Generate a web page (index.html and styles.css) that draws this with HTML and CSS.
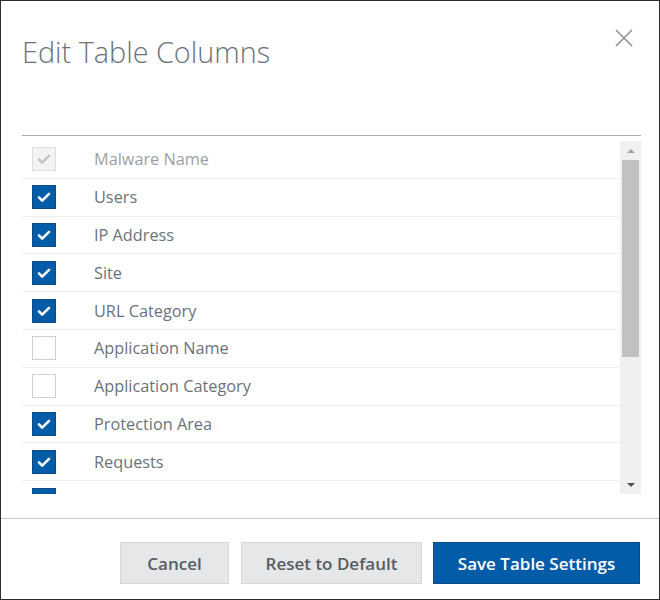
FILE: index.html
```html
<!doctype html>
<html lang="en">
<head>
<meta charset="utf-8">
<title>Edit Table Columns</title>
<link rel="stylesheet" href="styles.css">
</head>
<body>

<div class="dialog">
  <div class="header">
    <h1 class="title">Edit Table Columns</h1>
    <svg class="close" width="18" height="18" viewBox="0 0 18 18">
      <path d="M1 1 L17 17 M17 1 L1 17" stroke="#8c9297" stroke-width="1.6" fill="none"></path>
    </svg>
  </div>

  <div class="list">
    <div class="rows">
      <div class="row disabled">
        <span class="box"><svg viewBox="0 0 24 24"><path d="M6.5 12.5 L10 16 L17.5 8.5"></path></svg></span>
        <span class="label">Malware Name</span>
      </div>
      <div class="row checked">
        <span class="box"><svg viewBox="0 0 24 24"><path d="M6.5 12.5 L10 16 L17.5 8.5"></path></svg></span>
        <span class="label">Users</span>
      </div>
      <div class="row checked">
        <span class="box"><svg viewBox="0 0 24 24"><path d="M6.5 12.5 L10 16 L17.5 8.5"></path></svg></span>
        <span class="label">IP Address</span>
      </div>
      <div class="row checked">
        <span class="box"><svg viewBox="0 0 24 24"><path d="M6.5 12.5 L10 16 L17.5 8.5"></path></svg></span>
        <span class="label">Site</span>
      </div>
      <div class="row checked">
        <span class="box"><svg viewBox="0 0 24 24"><path d="M6.5 12.5 L10 16 L17.5 8.5"></path></svg></span>
        <span class="label">URL Category</span>
      </div>
      <div class="row">
        <span class="box"></span>
        <span class="label">Application Name</span>
      </div>
      <div class="row">
        <span class="box"></span>
        <span class="label">Application Category</span>
      </div>
      <div class="row checked">
        <span class="box"><svg viewBox="0 0 24 24"><path d="M6.5 12.5 L10 16 L17.5 8.5"></path></svg></span>
        <span class="label">Protection Area</span>
      </div>
      <div class="row checked">
        <span class="box"><svg viewBox="0 0 24 24"><path d="M6.5 12.5 L10 16 L17.5 8.5"></path></svg></span>
        <span class="label">Requests</span>
      </div>
      <div class="row checked">
        <span class="box"><svg viewBox="0 0 24 24"><path d="M6.5 12.5 L10 16 L17.5 8.5"></path></svg></span>
        <span class="label">Allowed Requests</span>
      </div>
    </div>
    <div class="scrollbar">
      <span class="arrow up"></span>
      <span class="thumb"></span>
      <span class="arrow down"></span>
    </div>
  </div>

  <div class="footer">
    <button class="btn cancel">Cancel</button>
    <button class="btn reset">Reset to Default</button>
    <button class="btn primary">Save Table Settings</button>
  </div>
</div>

</body>
</html>
```

FILE: styles.css
```css
body {
  margin: 0;
  font-family: "Open Sans", "Noto Sans", sans-serif;
}
.dialog {
  width: 660px;
  height: 600px;
  box-sizing: border-box;
  border: 1px solid #2e2e2e;
  background: #fff;
  display: flex;
  flex-direction: column;
}
.header {
  display: flex;
  justify-content: space-between;
  align-items: flex-start;
  height: 134px;
  padding: 0 26px 0 21px;
}
.title {
  margin: 33px 0 0;
  font-size: 28.8px;
  line-height: 36px;
  font-weight: 300;
  color: #6b7379;
}
.close {
  margin-top: 28px;
}
.list {
  margin: 0 18px 0 21px;
  border-top: 1px solid #a9acae;
  padding-top: 5px;
  display: flex;
  height: 353px;
}
.rows {
  flex: 1;
  overflow: hidden;
}
.row {
  height: 36.8px;
  border-bottom: 1px solid #eeeeee;
  display: flex;
  align-items: center;
}
.box {
  width: 22px;
  height: 22px;
  margin-left: 10px;
  border: 1px solid #cfd2d4;
  background: #fff;
  display: flex;
}
.box svg {
  width: 22px;
  height: 22px;
}
.box path {
  fill: none;
  stroke: #fff;
  stroke-width: 2.8;
  stroke-linecap: round;
  stroke-linejoin: round;
}
.checked .box {
  background: #035ca8;
  border-color: #0d4b85;
}
.disabled .box {
  background: #f3f3f3;
  border-color: #dedede;
}
.disabled .box path {
  stroke: #c2c4c6;
}
.label {
  margin-left: 38px;
  font-size: 16.3px;
  color: #6b7379;
}
.disabled .label {
  color: #9b9fa3;
}
.scrollbar {
  width: 21px;
  margin-left: 1px;
  background: #f0f0f0;
  display: flex;
  flex-direction: column;
  align-items: center;
}
.arrow {
  width: 0;
  height: 0;
  border-left: 4px solid transparent;
  border-right: 4px solid transparent;
}
.arrow.up {
  margin-top: 8px;
  border-bottom: 4px solid #a3a3a3;
  margin-bottom: 7px;
}
.arrow.down {
  margin-top: auto;
  margin-bottom: 7px;
  border-top: 4px solid #505050;
}
.thumb {
  width: 17px;
  height: 197px;
  background: #c1c1c1;
}
.footer {
  margin-top: 24px;
  border-top: 1px solid #c9c9c9;
  display: flex;
  justify-content: flex-end;
  padding: 23px 19px 0 0;
}
.btn {
  height: 42px;
  font-family: "Open Sans", "Noto Sans", sans-serif;
  font-size: 17px;
  font-weight: 600;
  color: #575d62;
  background: #e6e7e8;
  border: 1px solid #d6d7d8;
  padding: 0;
}
.cancel {
  width: 109px;
}
.reset {
  width: 181px;
  margin: 0 11px 0 12px;
}
.primary {
  width: 207px;
  background: #035ca8;
  border-color: #0d4b85;
  color: #fff;
}
```
